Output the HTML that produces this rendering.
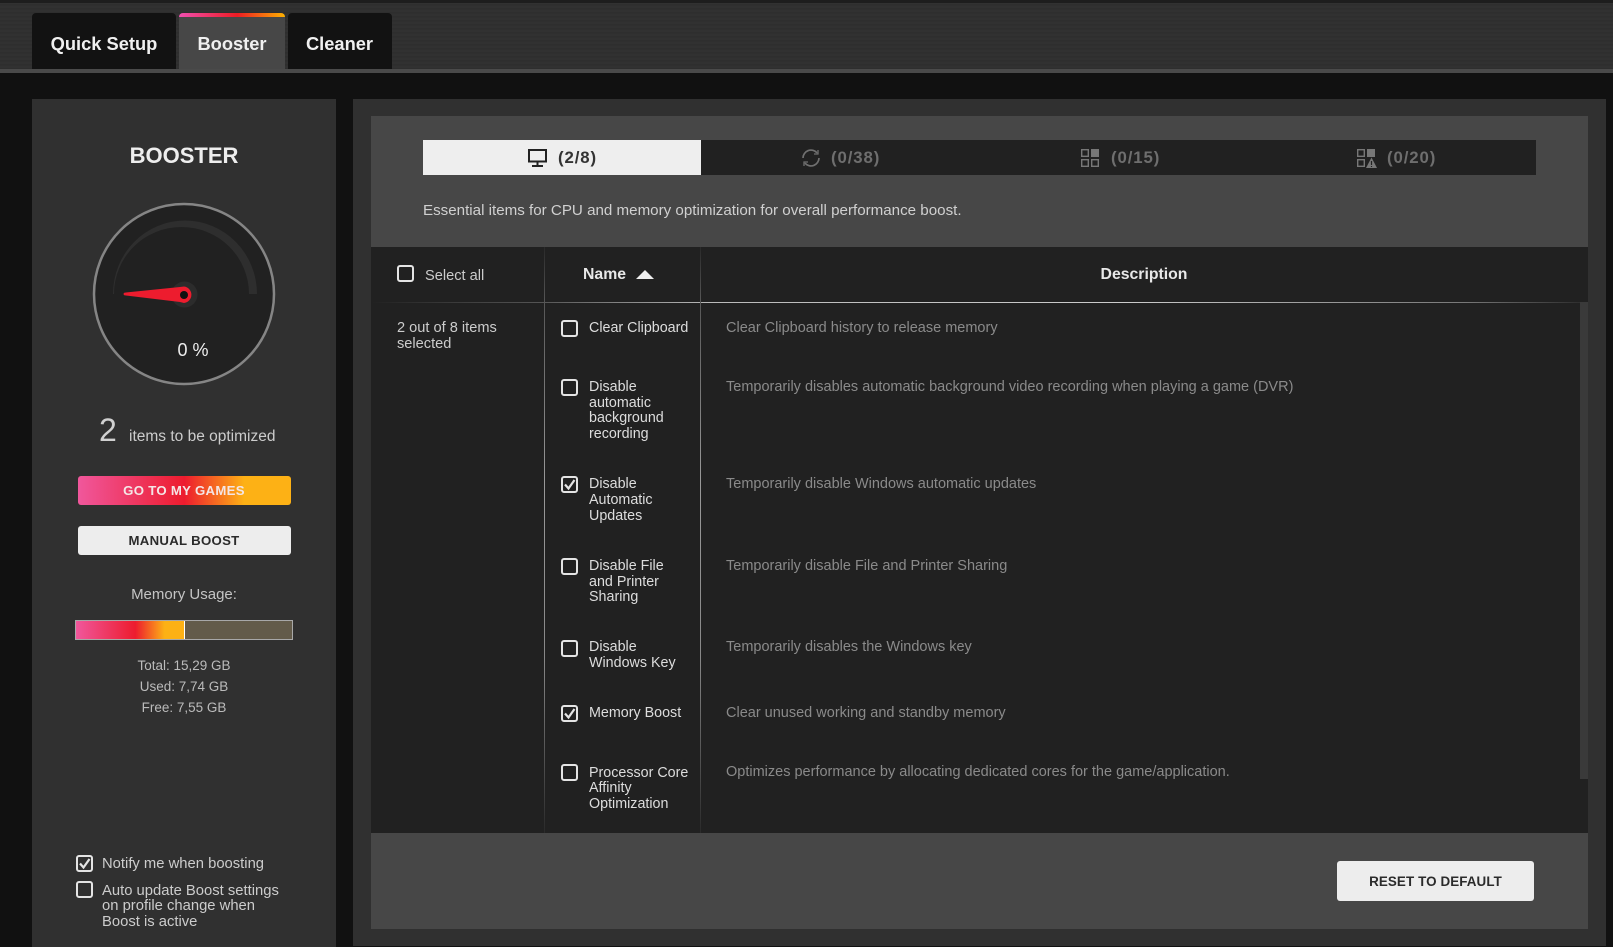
<!DOCTYPE html>
<html><head><meta charset="utf-8"><style>
html,body{margin:0;padding:0;background:#111}
body{width:1613px;height:947px;position:relative;overflow:hidden;font-family:"Liberation Sans",sans-serif;color:#ddd}
.a{position:absolute}
.t{position:absolute;white-space:nowrap;line-height:16px;font-size:15px;transform:translateY(calc(-50% + 1px))}
.cb{position:absolute;width:13px;height:13px;border:2px solid #e4e4e4;border-radius:3px}
.cb svg{position:absolute;left:0;top:0}
.n{color:#ddd;font-size:14.3px;left:589px}
.d{color:#8a8a8a;font-size:14.5px;left:726px}
.c{text-align:center;transform:translate(-50%,calc(-50% + 1px))}
.cnt{font-size:16.8px;font-weight:bold;color:#6e6e6e;letter-spacing:.9px}
</style></head><body>
<div class="a" style="left:0;top:0;width:1613px;height:69px;background:repeating-linear-gradient(0deg,#2e2e2e 0 1px,#313131 1px 3px,#2f2f2f 3px 4px)"></div>
<div class="a" style="left:0;top:0;width:1613px;height:3px;background:#1d1d1d"></div>
<div class="a" style="left:0;top:69px;width:1613px;height:4px;background:#4a4a4a"></div>
<div class="a" style="left:32px;top:13px;width:144px;height:56px;background:#121212;border-radius:4px 4px 0 0"></div>
<div class="a" style="left:179px;top:13px;width:106px;height:56px;background:#474747;border-radius:4px 4px 0 0;overflow:hidden"><div style="height:4px;background:linear-gradient(90deg,#f14fb0,#ed1c24 55%,#fdb100)"></div></div>
<div class="a" style="left:288px;top:13px;width:104px;height:56px;background:#121212;border-radius:4px 4px 0 0"></div>
<div class="t c" style="left:104px;top:43px;font-size:18.3px;font-weight:bold;color:#f0f0f0">Quick Setup</div>
<div class="t c" style="left:232px;top:43px;font-size:18.3px;font-weight:bold;color:#f0f0f0">Booster</div>
<div class="t c" style="left:339.5px;top:43px;font-size:18.3px;font-weight:bold;color:#f0f0f0">Cleaner</div>

<div class="a" style="left:32px;top:99px;width:304px;height:848px;background:#303030"></div>
<div class="a" style="left:353px;top:99px;width:1253px;height:847px;background:#303030"></div>
<div class="a" style="left:371px;top:116px;width:1217px;height:813px;background:#474747"></div>
<div class="a" style="left:371px;top:247px;width:1217px;height:586px;background:#212121"></div>

<div class="t c" style="left:184px;top:155px;font-size:22px;font-weight:bold;color:#eee">BOOSTER</div>
<svg class="a" style="left:84px;top:194px" width="200" height="200" viewBox="84 194 200 200">
<circle cx="184" cy="294" r="90" fill="#212121" stroke="#858585" stroke-width="2.5"/>
<path d="M113 294A71.5 73 0 0 1 257 294L249 294A67.5 67 0 0 0 114 294Z" fill="#2e2e2e"/>
<circle cx="184.5" cy="294.5" r="13" fill="#2c2c2c"/>
<path d="M125 292.6L180 287L184 286.5A8.3 8.3 0 0 1 184 303L180 302L125 295.4A1.4 1.4 0 0 1 125 292.6Z" fill="#ed1c2e"/>
<circle cx="184" cy="295" r="4" fill="#111"/>
</svg>
<div class="t c" style="left:193px;top:349px;font-size:18px;color:#eee">0 %</div>
<div class="t" style="left:99px;top:429px;font-size:32px;line-height:36px;color:#d0d0d0;font-weight:normal">2</div>
<div class="t" style="left:129px;top:436px;font-size:15.5px;color:#ccc">items to be optimized</div>
<div class="a" style="left:78px;top:476px;width:213px;height:29px;border-radius:3px;background:linear-gradient(90deg,#f0579c,#ed1c2e 50%,#fdb115 78%)"></div>
<div class="t c" style="left:184px;top:490px;font-size:13.2px;font-weight:bold;color:#f4e6e6;letter-spacing:.3px">GO TO MY GAMES</div>
<div class="a" style="left:78px;top:526px;width:213px;height:29px;border-radius:3px;background:#ededed"></div>
<div class="t c" style="left:184px;top:540px;font-size:13.2px;font-weight:bold;color:#2b2b2b;letter-spacing:.3px">MANUAL BOOST</div>
<div class="t c" style="left:184px;top:594px;font-size:15px;color:#c4c4c4">Memory Usage:</div>
<div class="a" style="left:75px;top:620px;width:218px;height:20px;background:#635b4a;box-sizing:border-box;border:1px solid #a8a8a8"></div>
<div class="a" style="left:76px;top:621px;width:108px;height:18px;background:linear-gradient(90deg,#f0579c,#ed1c2e 55%,#fdb115 82%);border-right:1px solid #fff"></div>
<div class="t c" style="left:184px;top:665px;font-size:13.5px;color:#bbb">Total: 15,29 GB</div>
<div class="t c" style="left:184px;top:686px;font-size:13.5px;color:#bbb">Used: 7,74 GB</div>
<div class="t c" style="left:184px;top:707px;font-size:13.5px;color:#bbb">Free: 7,55 GB</div>

<div class="cb" style="left:76px;top:855px"><svg width="13" height="13" viewBox="0 0 13 13"><path d="M2 6.5L5.5 10.5L11.5 2" fill="none" stroke="#e4e4e4" stroke-width="2.2"/></svg></div>
<div class="t" style="left:102px;top:863px;font-size:14.8px;color:#ccc">Notify me when boosting</div>
<div class="cb" style="left:76px;top:881px"></div>
<div class="t" style="left:102px;top:890px;font-size:14.8px;color:#ccc">Auto update Boost settings</div>
<div class="t" style="left:102px;top:905px;font-size:14.8px;color:#ccc">on profile change when</div>
<div class="t" style="left:102px;top:921px;font-size:14.8px;color:#ccc">Boost is active</div>

<div class="a" style="left:423px;top:140px;width:1113px;height:35px;background:#212121"></div>
<div class="a" style="left:423px;top:140px;width:278px;height:35px;background:#eee"></div>
<svg class="a" style="left:528px;top:149px" width="19" height="18" viewBox="0 0 19 18" fill="none" stroke="#222" stroke-width="2"><rect x="1" y="1" width="17" height="11.5"/><path d="M9.5 13V16.5M4 17H15"/></svg>
<div class="t" style="left:558px;top:157px;font-size:16.8px;font-weight:bold;color:#333;letter-spacing:.9px">(2/8)</div>
<svg class="a" style="left:801px;top:148px" width="20" height="20" viewBox="0 0 20 20" fill="none" stroke="#707070" stroke-width="1.7"><path d="M2 10A8 8 0 0 1 16 4.8M18 10A8 8 0 0 1 4 15.2"/><path d="M17 2V6H13M3 18V14H7" stroke-width="1.3"/></svg>
<div class="t cnt" style="left:831px;top:157px">(0/38)</div>
<svg class="a" style="left:1081px;top:149px" width="18" height="18" viewBox="0 0 18 18" fill="none" stroke="#777" stroke-width="1.4"><rect x=".7" y=".7" width="6.6" height="6.6"/><rect x="10" y="0" width="8" height="8" fill="#777" stroke="none"/><rect x=".7" y="10.7" width="6.6" height="6.6"/><rect x="10.7" y="10.7" width="6.6" height="6.6"/></svg>
<div class="t cnt" style="left:1111px;top:157px">(0/15)</div>
<svg class="a" style="left:1357px;top:149px" width="20" height="19" viewBox="0 0 20 19" fill="none" stroke="#777" stroke-width="1.4"><rect x=".7" y=".7" width="6.6" height="6.6"/><rect x="10" y="0" width="8" height="8" fill="#777" stroke="none"/><rect x=".7" y="10.7" width="6.6" height="6.6"/><path d="M14.5 8.5L20 19H9Z" fill="#777" stroke="none"/><path d="M14.5 12V16M14.5 17V18" stroke="#212121" stroke-width="1.2"/></svg>
<div class="t cnt" style="left:1387px;top:157px">(0/20)</div>
<div class="t" style="left:423px;top:210px;font-size:15.15px;color:#d0d0d0">Essential items for CPU and memory optimization for overall performance boost.</div>

<div class="a" style="left:371px;top:302px;width:1217px;height:1px;background:linear-gradient(90deg,#212121,#555 14%,#bbb 28%,#ccc 62%,#777 90%,#2a2a2a)"></div>
<div class="a" style="left:544px;top:247px;width:1px;height:586px;background:linear-gradient(180deg,#2a2a2a,#555 9%,#999 40%,#888 70%,#2a2a2a)"></div>
<div class="a" style="left:700px;top:247px;width:1px;height:586px;background:linear-gradient(180deg,#2a2a2a,#555 9%,#999 40%,#888 70%,#2a2a2a)"></div>
<div class="a" style="left:1580px;top:302px;width:8px;height:477px;background:#3a3a3a"></div>

<div class="cb" style="left:397px;top:265px"></div>
<div class="t" style="left:425px;top:275px;font-size:14.6px;color:#ccc">Select all</div>
<div class="t" style="left:583px;top:274px;font-size:15.8px;font-weight:bold;color:#e8e8e8">Name</div>
<svg class="a" style="left:636px;top:269px" width="18" height="10"><path d="M0 10L9 1L18 10Z" fill="#eee"/></svg>
<div class="t c" style="left:1144px;top:274px;font-size:15.8px;font-weight:bold;color:#e8e8e8">Description</div>
<div class="t" style="left:397px;top:327px;font-size:14.6px;color:#ccc">2 out of 8 items</div>
<div class="t" style="left:397px;top:343px;font-size:14.6px;color:#ccc">selected</div>

<div class="cb" style="left:561px;top:320px"></div>
<div class="t n" style="top:327px">Clear Clipboard</div>
<div class="t d" style="top:327px">Clear Clipboard history to release memory</div>

<div class="cb" style="left:561px;top:379px"></div>
<div class="t n" style="top:386px">Disable</div>
<div class="t n" style="top:402px">automatic</div>
<div class="t n" style="top:417px">background</div>
<div class="t n" style="top:433px">recording</div>
<div class="t d" style="top:386px">Temporarily disables automatic background video recording when playing a game (DVR)</div>

<div class="cb" style="left:561px;top:476px"><svg width="13" height="13" viewBox="0 0 13 13"><path d="M2 6.5L5.5 10.5L11.5 2" fill="none" stroke="#e4e4e4" stroke-width="2.2"/></svg></div>
<div class="t n" style="top:483px">Disable</div>
<div class="t n" style="top:499px">Automatic</div>
<div class="t n" style="top:515px">Updates</div>
<div class="t d" style="top:483px">Temporarily disable Windows automatic updates</div>

<div class="cb" style="left:561px;top:558px"></div>
<div class="t n" style="top:565px">Disable File</div>
<div class="t n" style="top:581px">and Printer</div>
<div class="t n" style="top:596px">Sharing</div>
<div class="t d" style="top:565px">Temporarily disable File and Printer Sharing</div>

<div class="cb" style="left:561px;top:640px"></div>
<div class="t n" style="top:646px">Disable</div>
<div class="t n" style="top:662px">Windows Key</div>
<div class="t d" style="top:646px">Temporarily disables the Windows key</div>

<div class="cb" style="left:561px;top:705px"><svg width="13" height="13" viewBox="0 0 13 13"><path d="M2 6.5L5.5 10.5L11.5 2" fill="none" stroke="#e4e4e4" stroke-width="2.2"/></svg></div>
<div class="t n" style="top:712px">Memory Boost</div>
<div class="t d" style="top:712px">Clear unused working and standby memory</div>

<div class="cb" style="left:561px;top:764px"></div>
<div class="t n" style="top:772px">Processor Core</div>
<div class="t n" style="top:787px">Affinity</div>
<div class="t n" style="top:803px">Optimization</div>
<div class="t d" style="top:771px">Optimizes performance by allocating dedicated cores for the game/application.</div>

<div class="a" style="left:1337px;top:861px;width:197px;height:40px;border-radius:3px;background:#ededed"></div>
<div class="t c" style="left:1435.5px;top:881px;font-size:13.4px;font-weight:bold;color:#2b2b2b;letter-spacing:.1px">RESET TO DEFAULT</div>
</body></html>
